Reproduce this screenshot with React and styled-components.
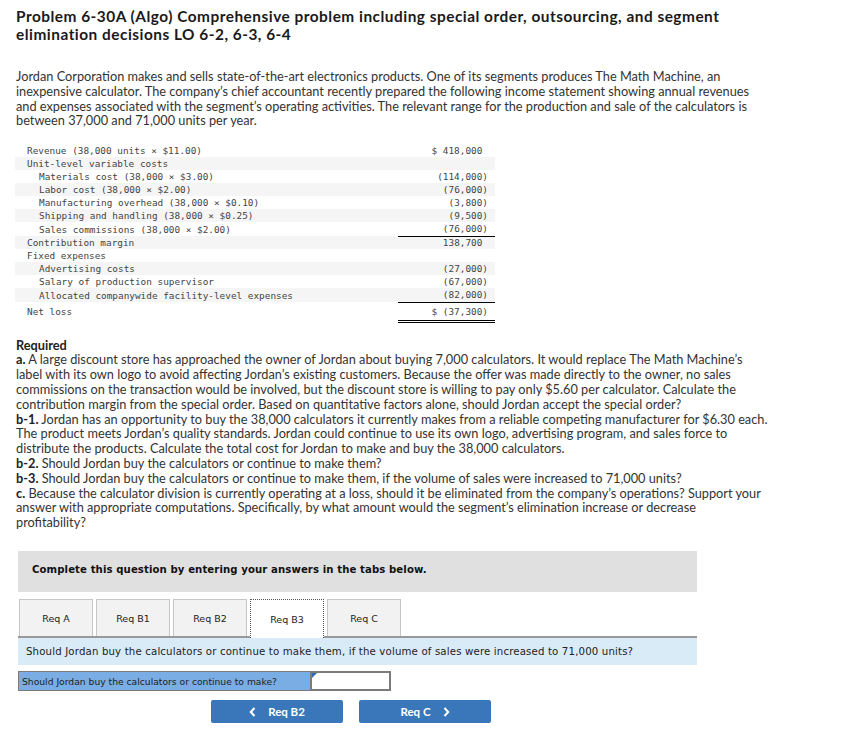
import styled, { createGlobalStyle } from "styled-components";

const GlobalStyle = createGlobalStyle`
  body {
    margin: 0;
    background: #fff;
    font-family: "Lato", "Open Sans", sans-serif;
    color: #333;
  }
`;

const Page = styled.div`
  width: 847px;
  padding: 7px 0 0 16px;
  box-sizing: border-box;
`;

const Title = styled.h1`
  margin: 0;
  font-family: "Lato", sans-serif;
  font-weight: 700;
  font-size: 15.4px;
  line-height: 18px;
  letter-spacing: 0.5px;
  color: #1a1a1a;
  white-space: nowrap;
`;

const Para = styled.p`
  margin: 26px 0 0 0;
  font-size: 12.75px;
  line-height: 14.8px;
  color: #333;
  white-space: nowrap;
`;

const Statement = styled.table`
  margin: 16px 0 0 -1px;
  width: 480px;
  border-collapse: collapse;
  font-family: "DejaVu Sans Mono", "Liberation Mono", monospace;
  font-size: 9.4px;
  color: #444;
`;

const Row = styled.tr`
  background: ${(p) => (p.$shade ? "#f5f5f5" : "transparent")};
  height: ${(p) => p.$h || 13}px;
`;

const Label = styled.td`
  padding: 0 0 0 ${(p) => 12 + (p.$indent || 0) * 12}px;
  white-space: pre;
`;

const Amount = styled.td`
  width: 90px;
  text-align: right;
  padding: 0 7px 0 0;
  white-space: pre;
  border-bottom: ${(p) =>
    p.$line === "double"
      ? "3px double #000"
      : p.$line === "single"
      ? "1px solid #000"
      : "none"};
`;

const Required = styled.div`
  margin-top: 15px;
  font-size: 12.75px;
  line-height: 14.8px;
  color: #333;
  white-space: nowrap;
`;

const Heading = styled.div`
  font-weight: 700;
  color: #222;
`;

const B = styled.b`
  color: #222;
`;

const Panel = styled.div`
  margin: 21px 0 0 2px;
  width: 679px;
`;

const Instruction = styled.div`
  height: 41px;
  background: #e0e0e0;
  display: flex;
  align-items: center;
  padding: 0 0 5px 14px;
  box-sizing: border-box;
  font-family: "DejaVu Sans", Verdana, sans-serif;
  font-weight: 700;
  font-size: 10.15px;
  color: #111;
  letter-spacing: 0.1px;
`;

const Tabs = styled.div`
  margin-top: 7px;
  display: flex;
  gap: 3px;
  padding-left: 1px;
  border-bottom: 2px solid #999;
`;

const Tab = styled.div`
  width: 74px;
  box-sizing: border-box;
  display: flex;
  align-items: center;
  justify-content: center;
  padding-top: ${(p) => (p.$active ? 0 : 1)}px;
  font-family: "DejaVu Sans", Verdana, sans-serif;
  font-size: 9.5px;
  color: #222;
  background: ${(p) => (p.$active ? "#fff" : "#f2f2f2")};
  border: ${(p) => (p.$active ? "1px dotted #555" : "1px solid #c6c6c6")};
  border-bottom: none;
  margin-bottom: ${(p) => (p.$active ? "-2px" : "0")};
  height: ${(p) => (p.$active ? 39 : 37)}px;
`;

const Prompt = styled.div`
  height: 27px;
  background: #daebf8;
  display: flex;
  align-items: center;
  padding-left: 8px;
  font-family: "DejaVu Sans", Verdana, sans-serif;
  font-size: 10.2px;
  color: #222;
  letter-spacing: 0.15px;
`;

const AnswerRow = styled.div`
  margin-top: 6px;
  display: flex;
  height: 20px;
`;

const AnswerLabel = styled.div`
  width: 293px;
  box-sizing: border-box;
  background: #79ade4;
  border: 1px solid #7b7b7b;
  display: flex;
  align-items: center;
  padding-left: 3px;
  font-family: "DejaVu Sans", Verdana, sans-serif;
  font-size: 9.2px;
  color: #222;
`;

const AnswerInput = styled.div`
  position: relative;
  width: 80px;
  box-sizing: border-box;
  background: #fff;
  border: 2px solid #7b7b7b;
  border-left-width: 1px;

  &::before {
    content: "";
    position: absolute;
    top: 0;
    left: 0;
    border-top: 5px solid #2e6db5;
    border-right: 5px solid transparent;
  }
`;

const Nav = styled.div`
  margin: 9px 0 0 193px;
  display: flex;
  gap: 16px;
`;

const NavButton = styled.button`
  width: 132px;
  height: 23px;
  border: none;
  border-radius: 2px;
  background: #3a77ba;
  color: #fff;
  font-family: "Lato", sans-serif;
  font-weight: 700;
  font-size: 11.5px;
  display: flex;
  align-items: center;
  justify-content: center;
  gap: 12px;
  padding: 0;
`;

const Chevron = ({ dir }) => (
  <svg width="7" height="10" viewBox="0 0 7 10">
    <path
      d={dir === "left" ? "M5.5 1 L1.8 5 L5.5 9" : "M1.5 1 L5.2 5 L1.5 9"}
      fill="none"
      stroke="#fff"
      strokeWidth="2"
    />
  </svg>
);

const rows = [
  { label: "Revenue (38,000 units × $11.00)", amt: "$ 418,000 ", indent: 0 },
  { label: "Unit-level variable costs", amt: "", indent: 0 },
  { label: "Materials cost (38,000 × $3.00)", amt: "(114,000)", indent: 1 },
  { label: "Labor cost (38,000 × $2.00)", amt: "(76,000)", indent: 1 },
  { label: "Manufacturing overhead (38,000 × $0.10)", amt: "(3,800)", indent: 1 },
  { label: "Shipping and handling (38,000 × $0.25)", amt: "(9,500)", indent: 1 },
  { label: "Sales commissions (38,000 × $2.00)", amt: "(76,000)", indent: 1, line: "single", h: 14 },
  { label: "Contribution margin", amt: "138,700 ", indent: 0 },
  { label: "Fixed expenses", amt: "", indent: 0 },
  { label: "Advertising costs", amt: "(27,000)", indent: 1 },
  { label: "Salary of production supervisor", amt: "(67,000)", indent: 1 },
  { label: "Allocated companywide facility-level expenses", amt: "(82,000)", indent: 1, line: "single", h: 14 },
  { label: "Net loss", amt: "$ (37,300)", indent: 0, line: "double", h: 19 },
];

const tabs = ["Req A", "Req B1", "Req B2", "Req B3", "Req C"];

export default function App() {
  return (
    <Page>
      <GlobalStyle />
      <Title>
        Problem 6-30A (Algo) Comprehensive problem including special order, outsourcing, and segment
        <br />
        elimination decisions LO 6-2, 6-3, 6-4
      </Title>

      <Para>
        Jordan Corporation makes and sells state-of-the-art electronics products. One of its segments produces The Math Machine, an
        <br />
        inexpensive calculator. The company’s chief accountant recently prepared the following income statement showing annual revenues
        <br />
        and expenses associated with the segment’s operating activities. The relevant range for the production and sale of the calculators is
        <br />
        between 37,000 and 71,000 units per year.
      </Para>

      <Statement>
        <tbody>
          {rows.map((r, i) => (
            <Row key={r.label} $shade={i % 2 === 1 && i !== 12} $h={r.h}>
              <Label $indent={r.indent}>{r.label}</Label>
              <Amount $line={r.line}>{r.amt}</Amount>
            </Row>
          ))}
        </tbody>
      </Statement>

      <Required>
        <Heading>Required</Heading>
        <B>a.</B> A large discount store has approached the owner of Jordan about buying 7,000 calculators. It would replace The Math Machine’s
        <br />
        label with its own logo to avoid affecting Jordan’s existing customers. Because the offer was made directly to the owner, no sales
        <br />
        commissions on the transaction would be involved, but the discount store is willing to pay only $5.60 per calculator. Calculate the
        <br />
        contribution margin from the special order. Based on quantitative factors alone, should Jordan accept the special order?
        <br />
        <B>b-1.</B> Jordan has an opportunity to buy the 38,000 calculators it currently makes from a reliable competing manufacturer for $6.30 each.
        <br />
        The product meets Jordan’s quality standards. Jordan could continue to use its own logo, advertising program, and sales force to
        <br />
        distribute the products. Calculate the total cost for Jordan to make and buy the 38,000 calculators.
        <br />
        <B>b-2.</B> Should Jordan buy the calculators or continue to make them?
        <br />
        <B>b-3.</B> Should Jordan buy the calculators or continue to make them, if the volume of sales were increased to 71,000 units?
        <br />
        <B>c.</B> Because the calculator division is currently operating at a loss, should it be eliminated from the company’s operations? Support your
        <br />
        answer with appropriate computations. Specifically, by what amount would the segment’s elimination increase or decrease
        <br />
        profitability?
      </Required>

      <Panel>
        <Instruction>Complete this question by entering your answers in the tabs below.</Instruction>
        <Tabs>
          {tabs.map((t) => (
            <Tab key={t} $active={t === "Req B3"}>
              {t}
            </Tab>
          ))}
        </Tabs>
        <Prompt>
          Should Jordan buy the calculators or continue to make them, if the volume of sales were increased to 71,000 units?
        </Prompt>
        <AnswerRow>
          <AnswerLabel>Should Jordan buy the calculators or continue to make?</AnswerLabel>
          <AnswerInput />
        </AnswerRow>
        <Nav>
          <NavButton>
            <Chevron dir="left" />
            Req B2
          </NavButton>
          <NavButton>
            Req C
            <Chevron dir="right" />
          </NavButton>
        </Nav>
      </Panel>
    </Page>
  );
}
